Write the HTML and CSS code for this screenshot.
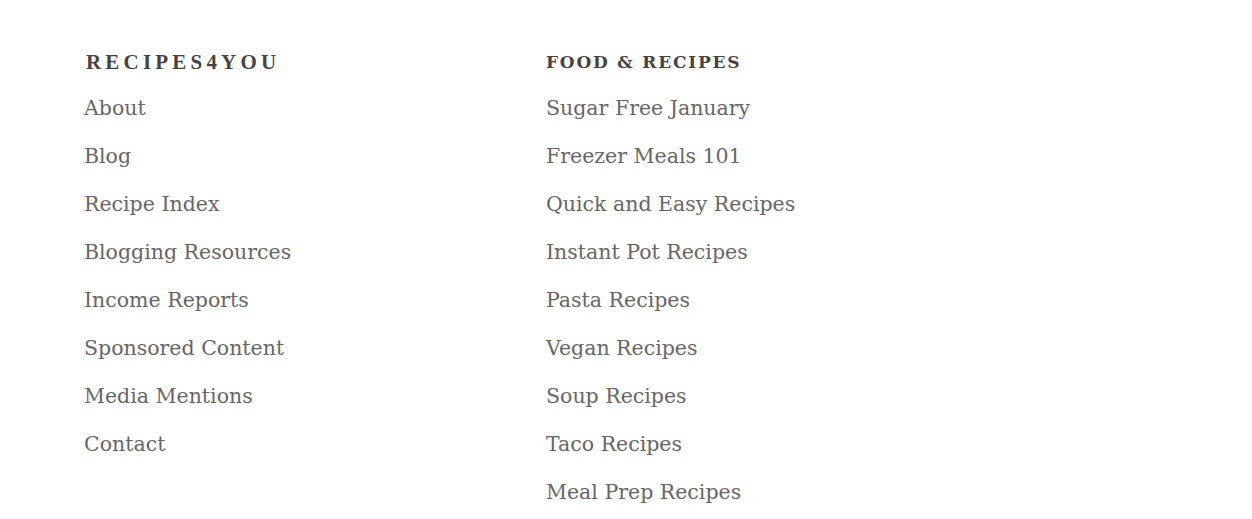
FILE: index.html
```html
<!DOCTYPE html>
<html lang="en">
<head>
<meta charset="utf-8">
<title>Footer</title>
<link rel="stylesheet" href="styles.css">
</head>
<body>
<footer class="footer">
  <section class="col col-first">
    <h3 class="title title-serif">RECIPES4YOU</h3>
    <ul class="links">
      <li><a href="#">About</a></li>
      <li><a href="#">Blog</a></li>
      <li><a href="#">Recipe Index</a></li>
      <li><a href="#">Blogging Resources</a></li>
      <li><a href="#">Income Reports</a></li>
      <li><a href="#">Sponsored Content</a></li>
      <li><a href="#">Media Mentions</a></li>
      <li><a href="#">Contact</a></li>
    </ul>
  </section>
  <section class="col">
    <h3 class="title title-slab">FOOD &amp; RECIPES</h3>
    <ul class="links">
      <li><a href="#">Sugar Free January</a></li>
      <li><a href="#">Freezer Meals 101</a></li>
      <li><a href="#">Quick and Easy Recipes</a></li>
      <li><a href="#">Instant Pot Recipes</a></li>
      <li><a href="#">Pasta Recipes</a></li>
      <li><a href="#">Vegan Recipes</a></li>
      <li><a href="#">Soup Recipes</a></li>
      <li><a href="#">Taco Recipes</a></li>
      <li><a href="#">Meal Prep Recipes</a></li>
    </ul>
  </section>
</footer>
</body>
</html>
```
FILE: styles.css
```css
html, body {
  margin: 0;
  padding: 0;
  background: #ffffff;
}

.footer {
  display: flex;
  padding: 48px 0 0 84px;
}

.col-first {
  width: 462px;
}

.title {
  margin: 0;
  height: 28px;
  line-height: 28px;
  color: #444444;
  font-weight: 700;
}

.title-serif {
  font-family: "Liberation Serif", serif;
  font-size: 21px;
  letter-spacing: 4.2px;
  margin-left: 2px;
}

.title-slab {
  font-family: "DejaVu Serif", serif;
  font-size: 17px;
  letter-spacing: 1.8px;
}

.links {
  list-style: none;
  margin: 0;
  padding: 0;
  display: flex;
  flex-direction: column;
  margin-top: 8px;
}

.links li {
  height: 48px;
  line-height: 48px;
}

.links a {
  font-family: "DejaVu Serif", serif;
  font-size: 20.5px;
  color: #666666;
  text-decoration: none;
}
```
